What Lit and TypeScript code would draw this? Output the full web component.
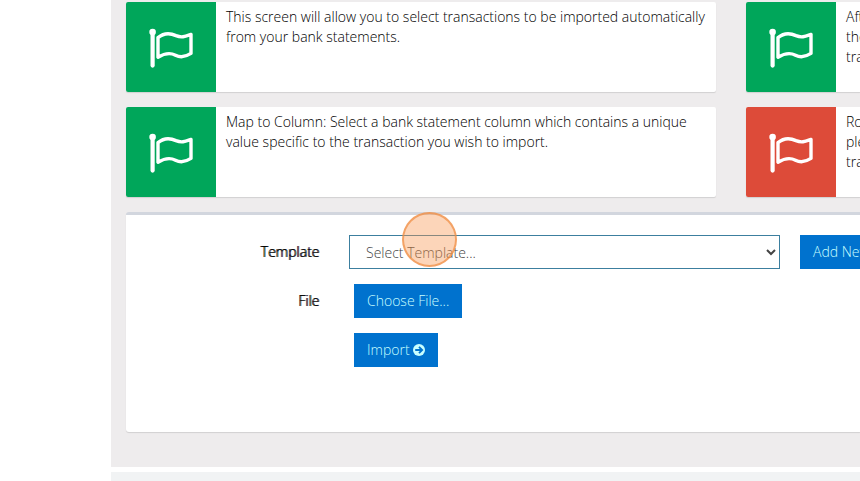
import { LitElement, html, css } from "lit";
import { customElement, property } from "lit/decorators.js";

@customElement("info-card")
class InfoCard extends LitElement {
  @property({ type: Boolean, reflect: true }) danger = false;
  @property({ type: Boolean, reflect: true }) clipped = false;

  static styles = css`
    :host {
      display: flex;
      min-width: 0;
      min-height: 90px;
      overflow: hidden;
      border-radius: 2px;
      background: #fff;
      box-shadow: 0 1px 1px rgba(0, 0, 0, 0.12);
    }
    :host([clipped]) {
      border-radius: 2px 0 0 2px;
      white-space: nowrap;
    }
    .badge {
      flex: none;
      width: 90px;
      display: grid;
      place-items: center;
      background: #00a65a;
    }
    :host([danger]) .badge {
      background: #dd4b39;
    }
    .body {
      flex: 1;
      min-width: 0;
      padding: 5px 10px;
    }
    svg {
      display: block;
    }
  `;

  render() {
    return html`
      <div class="badge">
        <svg width="46" height="46" viewBox="0 0 46 46" fill="none" stroke="#fff" aria-hidden="true">
          <circle cx="4.6" cy="8" r="3.3" fill="#fff" stroke="none" />
          <path d="M4.6 9V41.6" stroke-width="4.2" stroke-linecap="round" />
          <path
            d="M10 13.6C16 8.6 22 8.8 28 11.6C34 14.2 37.5 12.4 43 10.4V29.4C37.5 33 33 34 27.5 31.2C21.5 28.2 16 29.6 10 33.2Z"
            stroke-width="3.4"
            stroke-linejoin="round"
          />
        </svg>
      </div>
      <div class="body"><slot></slot></div>
    `;
  }
}

@customElement("app-root")
class AppRoot extends LitElement {
  static styles = css`
    :host {
      display: flex;
      flex-direction: column;
      min-height: 100vh;
      padding-left: 111px;
      box-sizing: border-box;
      overflow: hidden;
      background: #fff;
      color: #000;
      font: 300 14px/20px "Open Sans", sans-serif;
    }
    main {
      display: flex;
      flex-direction: column;
      gap: 15px;
      padding: 2px 0 35px 15px;
      background: #eeeced;
    }
    .cards {
      display: grid;
      grid-template-columns: minmax(0, 590fr) minmax(0, 114fr);
      gap: 15px 30px;
    }
    .panel {
      display: flex;
      flex-direction: column;
      gap: 15px;
      min-height: 220px;
      box-sizing: border-box;
      padding: 20px 0;
      border-top: 3px solid #d2d6de;
      border-radius: 3px 0 0 3px;
      background: #fff;
      box-shadow: 0 1px 1px rgba(0, 0, 0, 0.12);
    }
    .row {
      display: flex;
      align-items: center;
    }
    .label {
      flex: none;
      width: 193px;
      margin-right: 30px;
      text-align: right;
      text-shadow: 1px 0 0 #000;
    }
    .indent {
      margin-left: 5px;
    }
    .field {
      position: relative;
      flex: 1;
      min-width: 0;
      margin-right: 20px;
    }
    select {
      display: block;
      width: 100%;
      height: 34px;
      box-sizing: border-box;
      padding: 6px 0 6px 12px;
      border: 1px solid #3c7f9f;
      border-radius: 0;
      background: #fff;
      color: #444;
      font: inherit;
    }
    .pointer {
      position: absolute;
      left: 53px;
      top: -23px;
      width: 55px;
      height: 55px;
      box-sizing: border-box;
      border: 2px solid rgba(240, 140, 65, 0.7);
      border-radius: 50%;
      background: rgba(248, 150, 80, 0.4);
      pointer-events: none;
    }
    button {
      display: inline-flex;
      align-items: center;
      gap: 3px;
      height: 34px;
      padding: 6px 13px;
      border: 0;
      border-radius: 0;
      background: #0072ce;
      color: #c8ffff;
      font: inherit;
      white-space: nowrap;
    }
    .add {
      flex: none;
      width: 60px;
      padding-right: 0;
      overflow: hidden;
      justify-content: flex-start;
    }
    footer {
      flex: 1;
      min-height: 9px;
      margin-top: 5px;
      background: #f1f3f4;
    }
  `;

  render() {
    return html`
      <main>
        <section class="cards">
          <info-card>
            This screen will allow you to select transactions to be imported automatically from your
            bank statements.
          </info-card>
          <info-card clipped>Aft<br />the<br />tra</info-card>
          <info-card>
            Map to Column: Select a bank statement column which contains a unique value specific to
            the transaction you wish to import.
          </info-card>
          <info-card clipped danger>Ro<br />ple<br />tra</info-card>
        </section>
        <form class="panel" @submit=${(e: Event) => e.preventDefault()}>
          <div class="row">
            <label class="label" for="template">Template</label>
            <div class="field">
              <select id="template">
                <option>Select Template...</option>
              </select>
              <div class="pointer"></div>
            </div>
            <button class="add" type="button">Add New</button>
          </div>
          <div class="row">
            <label class="label" for="file">File</label>
            <button class="indent" id="file" type="button">Choose File...</button>
          </div>
          <div class="row">
            <span class="label"></span>
            <button class="indent" type="submit">
              Import
              <svg width="12" height="12" viewBox="0 0 12 12" aria-hidden="true">
                <circle cx="6" cy="6" r="6" fill="#c8ffff" />
                <path d="M2.2 6H9M6 2.8L9.2 6L6 9.2" fill="none" stroke="#0072ce" stroke-width="1.8" />
              </svg>
            </button>
          </div>
        </form>
      </main>
      <footer></footer>
    `;
  }
}
